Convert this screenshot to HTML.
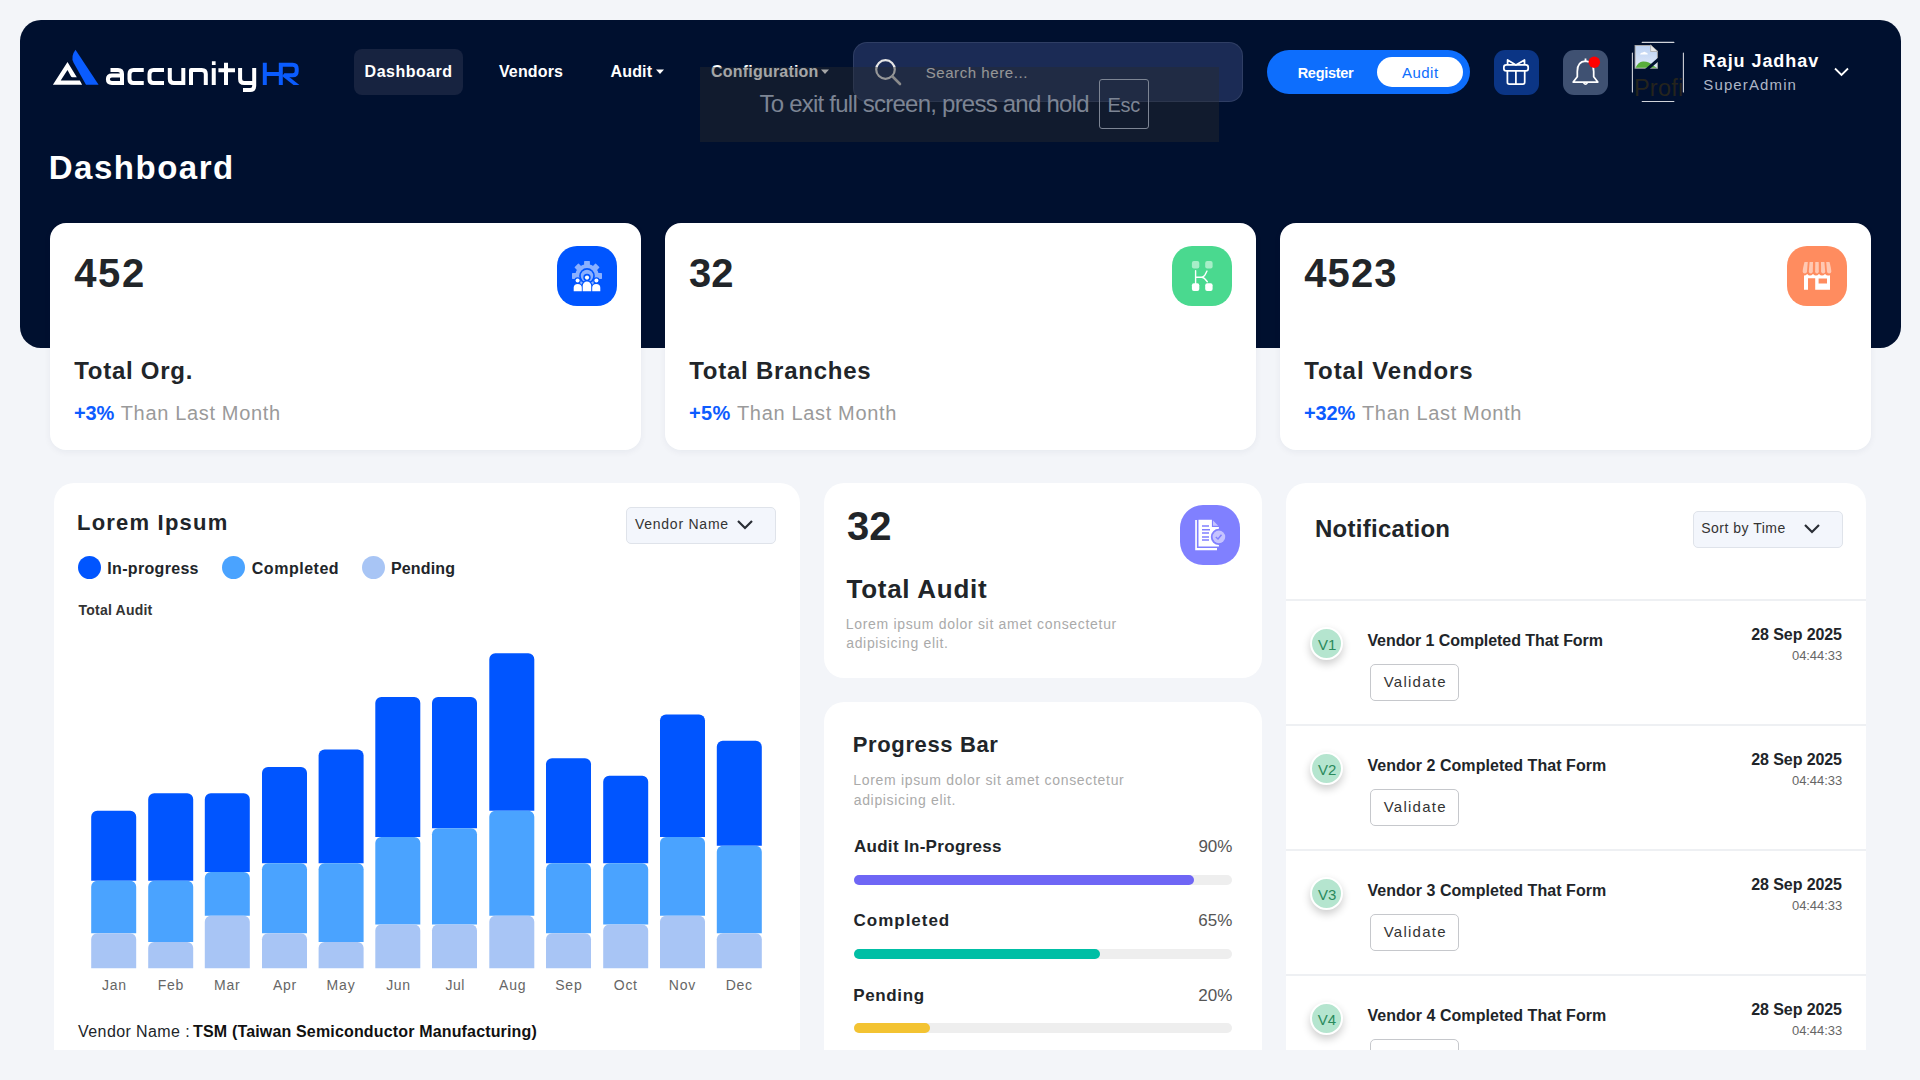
<!DOCTYPE html><html><head><meta charset="utf-8"><title>Dashboard</title><style>
*{margin:0;padding:0;box-sizing:border-box}
html,body{width:1920px;height:1080px;overflow:hidden;background:#f3f5f9;font-family:"Liberation Sans",sans-serif}
.a{position:absolute}
.t{position:absolute;white-space:nowrap;line-height:1}
svg{position:absolute;overflow:visible}
</style></head><body>
<div class="a" style="left:20px;top:20px;width:1881px;height:328px;background:#00102f;border-radius:21px"></div>
<svg style="left:0;top:0" width="320" height="110" viewBox="0 0 320 110">
<path d="M67.5 62.1 L76.8 77.2 H72.3 Q71.5 77.2 71 76.4 L67.5 70 L60.7 80.6 H79.8 L82.1 84.7 H52.9 Z" fill="#fff"/>
<path d="M86 84.7 L73.6 62.8 Q70.3 56.5 75.5 49.7 L98.6 84.7 Z" fill="#0a5cff"/>
<g fill="none" stroke="#fff" stroke-width="4" stroke-linejoin="round">
<path d="M110.5 70.1 H118 Q122 70.1 122 74.1 V85 M122 75.6 H111.9 Q107.9 75.6 107.9 79.25 Q107.9 82.9 111.9 82.9 H122"/>
<path d="M143.75 70.1 H133.5 Q129.5 70.1 129.5 74.1 V78.9 Q129.5 82.9 133.5 82.9 H143.75"/>
<path d="M164 70.1 H153.5 Q149.5 70.1 149.5 74.1 V78.9 Q149.5 82.9 153.5 82.9 H164"/>
<path d="M169.8 68.1 V78.9 Q169.8 82.9 173.8 82.9 H183.3 M183.3 68.1 V85"/>
<path d="M191 85 V70.1 H201.8 Q205.8 70.1 205.8 74.1 V85"/>
<path d="M213.75 68.1 V85"/>
<path d="M226 62.8 V85 M218.4 70.3 H235"/>
<path d="M240.1 68.1 V79 Q240.1 83 244.1 83 H254.2 M254.2 68.1 V86 Q254.2 89.9 250.2 89.9 H243"/>
</g>
<rect x="211.9" y="61.25" width="3.7" height="3.75" fill="#fff"/>
<g fill="none" stroke="#0a5cff" stroke-width="4" stroke-linejoin="round">
<path d="M264.8 62.8 V85 M266.8 74.1 H280.8 M280.8 62.8 V85 M280.8 64.8 H292.7 Q296.7 64.8 296.7 68.8 V71.3 Q296.7 75.3 292.7 75.3 H284.5"/>
</g>
<path d="M284.5 73.3 L299.4 85 H293.5 L282 76 Z" fill="#0a5cff"/>
</svg>
<div class="a" style="left:354px;top:49px;width:109px;height:46px;background:#172340;border-radius:8px"></div>
<div class="t" style="left:364.60px;top:63.66px;font-size:16px;font-weight:700;color:#fff;letter-spacing:0.487px;">Dashboard</div>
<div class="t" style="left:498.90px;top:63.66px;font-size:16px;font-weight:700;color:#fff;letter-spacing:0.150px;">Vendors</div>
<div class="t" style="left:610.60px;top:63.66px;font-size:16px;font-weight:700;color:#fff;letter-spacing:0.125px;">Audit</div>
<svg style="left:655.5px;top:69px" width="10" height="6"><path d="M0 0.5 L8 0.5 L4 5Z" fill="#fff"/></svg>
<div class="t" style="left:711.00px;top:63.66px;font-size:16px;font-weight:700;color:#fff;letter-spacing:0.208px;">Configuration</div>
<svg style="left:821px;top:69px" width="10" height="6"><path d="M0 0.5 L8 0.5 L4 5Z" fill="#fff"/></svg>
<div class="a" style="left:853px;top:42px;width:390px;height:60px;background:#1b2b55;border:1px solid rgba(255,255,255,0.09);border-radius:14px"></div>
<svg style="left:873px;top:57px" width="30" height="30" viewBox="0 0 30 30"><circle cx="12.5" cy="12.5" r="9.3" fill="none" stroke="#e6e6e6" stroke-width="2.2"/><path d="M19.5 19.5 L27 27" stroke="#cfcfcf" stroke-width="2.6" stroke-linecap="round"/></svg>
<div class="t" style="left:925.70px;top:65.40px;font-size:15px;font-weight:400;color:#e3e3e3;letter-spacing:0.569px;">Search here...</div>
<div class="a" style="left:1267px;top:50px;width:203px;height:44px;background:#0d6efd;border-radius:22px"></div>
<div class="a" style="left:1377px;top:57px;width:86px;height:30px;background:#fff;border-radius:15px"></div>
<div class="t" style="left:1297.70px;top:65.83px;font-size:14.5px;font-weight:700;color:#fff;letter-spacing:-0.286px;">Register</div>
<div class="t" style="left:1401.90px;top:65.40px;font-size:15px;font-weight:400;color:#0d6efd;letter-spacing:0.500px;">Audit</div>
<div class="a" style="left:1494px;top:50px;width:45px;height:45px;background:#0b3585;border-radius:11px"></div>
<svg style="left:1494px;top:50px" width="45" height="45" viewBox="0 0 45 45"><g fill="none" stroke="#fff" stroke-width="1.75" stroke-linejoin="round">
<rect x="9.85" y="14.9" width="24.35" height="6" rx="2.4"/>
<path d="M13.4 20.9 V32.3 Q13.4 34.1 15.2 34.1 H28.9 Q30.7 34.1 30.7 32.3 V20.9"/>
<path d="M21.9 20.9 V34.1"/>
<path d="M13.6 14.9 V9.9 L21.9 14.9 L30.5 9.9 V14.9"/>
</g></svg>
<div class="a" style="left:1563px;top:50px;width:45px;height:45px;background:#3f5172;border-radius:11px"></div>
<svg style="left:1563px;top:50px" width="45" height="45" viewBox="0 0 45 45"><g fill="none" stroke="#fff" stroke-width="1.75" stroke-linejoin="round">
<path d="M22.5 11.2 Q14.3 11.6 14.3 21.5 V26.8 L10.2 32 H34.8 L30.7 26.8 V21.5 Q30.7 11.6 22.5 11.2 Z"/>
<path d="M22.5 8.6 V11.2 M20.6 32.6 Q22.5 35.8 24.4 32.6"/>
</g><circle cx="31.3" cy="12.3" r="5.75" fill="#ff0000"/></svg>
<svg style="left:1630px;top:40px" width="60" height="66" viewBox="0 0 60 66">
<defs><linearGradient id="sky" x1="0" y1="0" x2="0" y2="1"><stop offset="0" stop-color="#bcd2f3"/><stop offset="1" stop-color="#dfe8f8"/></linearGradient></defs>
<path d="M12.2 2.4 H43.9" stroke="#d0d3da" stroke-width="1.1" stroke-linecap="round"/><path d="M12.2 61.5 H43.9" stroke="#d0d3da" stroke-width="1.1" stroke-linecap="round"/>
<path d="M2.4 13 V52" stroke="#d0d3da" stroke-width="1.1" stroke-linecap="round"/><path d="M53.4 13 V52" stroke="#d0d3da" stroke-width="1.1" stroke-linecap="round"/>
<path d="M4.6 5.5 Q4.6 4.9 5.3 4.9 H20.6 L27.9 11.5 V28.8 H4.6 Z" fill="#a9a9a9"/>
<path d="M5.6 5.9 H20.2 L26.9 12 V27.8 H5.6 Z" fill="url(#sky)"/>
<path d="M10 14.5 Q10.5 12.2 13 12.4 Q14.2 11 15.8 12.4 Q17.8 12.5 17.8 14.5 Z" fill="#fff"/>
<path d="M5.6 27.8 Q8 22 13 21.5 Q19 21.3 23 25.5 L26.9 27.8 Z" fill="#58ad3a"/>
<path d="M20.6 4.9 V11.5 H27.9 Z" fill="#e9e9e9" stroke="#a9a9a9" stroke-width="0.8"/>
<path d="M14.8 29.2 L28.3 17.6 V21.6 L19.4 29.2 Z" fill="#00102f"/>
</svg>
<div class="t" style="left:1634.00px;top:76.61px;font-size:23.5px;font-weight:400;color:#25241d;letter-spacing:0.200px;">Profi</div>
<div class="t" style="left:1702.80px;top:51.66px;font-size:18px;font-weight:700;color:#fff;letter-spacing:0.930px;">Raju Jadhav</div>
<div class="t" style="left:1703.30px;top:77.00px;font-size:15px;font-weight:400;color:#aeb6c6;letter-spacing:1.122px;">SuperAdmin</div>
<svg style="left:1834px;top:67px" width="16" height="10"><path d="M1 1.5 L7.5 8 L14 1.5" fill="none" stroke="#fff" stroke-width="1.8"/></svg>
<div class="a" style="left:700px;top:67px;width:519px;height:75px;background:rgba(40,42,46,0.42)"></div>
<div class="t" style="left:759.50px;top:91.78px;font-size:24px;font-weight:400;color:#7d8594;letter-spacing:-0.771px;">To exit full screen, press and hold</div>
<div class="a" style="left:1099px;top:79px;width:50px;height:50px;border:1.5px solid #7d8594;border-radius:3px"></div>
<div class="t" style="left:1107.40px;top:95.17px;font-size:20px;font-weight:400;color:#7d8594;letter-spacing:-0.300px;">Esc</div>
<div class="t" style="left:48.70px;top:151.07px;font-size:33px;font-weight:700;color:#fff;letter-spacing:1.525px;">Dashboard</div>
<div class="a" style="left:50px;top:223px;width:591px;height:227px;background:#fff;border-radius:16px;box-shadow:0 2px 7px rgba(20,30,70,0.055)"></div>
<div class="t" style="left:74.20px;top:253.14px;font-size:40px;font-weight:700;color:#212529;letter-spacing:1.650px;">452</div>
<div class="t" style="left:74.20px;top:359.08px;font-size:24px;font-weight:700;color:#212529;letter-spacing:0.733px;">Total Org.</div>
<div class="a" style="left:665px;top:223px;width:591px;height:227px;background:#fff;border-radius:16px;box-shadow:0 2px 7px rgba(20,30,70,0.055)"></div>
<div class="t" style="left:688.90px;top:253.14px;font-size:40px;font-weight:700;color:#212529;letter-spacing:0.100px;">32</div>
<div class="t" style="left:689.20px;top:359.08px;font-size:24px;font-weight:700;color:#212529;letter-spacing:0.762px;">Total Branches</div>
<div class="a" style="left:1280px;top:223px;width:591px;height:227px;background:#fff;border-radius:16px;box-shadow:0 2px 7px rgba(20,30,70,0.055)"></div>
<div class="t" style="left:1304.20px;top:253.14px;font-size:40px;font-weight:700;color:#212529;letter-spacing:1.133px;">4523</div>
<div class="t" style="left:1304.20px;top:359.08px;font-size:24px;font-weight:700;color:#212529;letter-spacing:0.967px;">Total Vendors</div>
<div class="t" style="left:74.00px;top:403.07px;font-size:20px;font-weight:700;color:#0d5cff;letter-spacing:-0.150px;">+3%</div>
<div class="t" style="left:120.75px;top:403.07px;font-size:20px;font-weight:400;color:#9a9a9a;letter-spacing:0.657px;">Than Last Month</div>
<div class="t" style="left:688.90px;top:403.07px;font-size:20px;font-weight:700;color:#0d5cff;letter-spacing:0.350px;">+5%</div>
<div class="t" style="left:737.00px;top:403.07px;font-size:20px;font-weight:400;color:#9a9a9a;letter-spacing:0.657px;">Than Last Month</div>
<div class="t" style="left:1303.90px;top:403.07px;font-size:20px;font-weight:700;color:#0d5cff;letter-spacing:-0.133px;">+32%</div>
<div class="t" style="left:1362.00px;top:403.07px;font-size:20px;font-weight:400;color:#9a9a9a;letter-spacing:0.657px;">Than Last Month</div>
<div class="a" style="left:557px;top:246px;width:60px;height:60px;background:#0055ff;border-radius:20px"></div>
<svg style="left:557px;top:246px" width="60" height="60" viewBox="0 0 60 60">
<g fill="#8ab0ff"><circle cx="30" cy="30" r="11.8"/><rect x="27.1" y="15" width="5.8" height="6" rx="0.6" transform="rotate(0 30 30)"/><rect x="27.1" y="15" width="5.8" height="6" rx="0.6" transform="rotate(45 30 30)"/><rect x="27.1" y="15" width="5.8" height="6" rx="0.6" transform="rotate(90 30 30)"/><rect x="27.1" y="15" width="5.8" height="6" rx="0.6" transform="rotate(135 30 30)"/><rect x="27.1" y="15" width="5.8" height="6" rx="0.6" transform="rotate(180 30 30)"/><rect x="27.1" y="15" width="5.8" height="6" rx="0.6" transform="rotate(225 30 30)"/><rect x="27.1" y="15" width="5.8" height="6" rx="0.6" transform="rotate(270 30 30)"/><rect x="27.1" y="15" width="5.8" height="6" rx="0.6" transform="rotate(315 30 30)"/></g>
<circle cx="30" cy="30" r="7.9" fill="#0055ff"/>
<circle cx="30" cy="30" r="6.2" fill="#8ab0ff"/>
<circle cx="30" cy="31.4" r="3.7" fill="#0055ff"/>
<circle cx="30" cy="31.6" r="2.1" fill="#fff"/>
<g fill="#0055ff" stroke="#0055ff" stroke-width="2.4">
<circle cx="20.6" cy="34.5" r="2"/><circle cx="39.4" cy="34.5" r="2"/>
<path d="M16.7 46 V41.8 A4.05 3.8 0 0 1 24.8 41.8 V46 Z"/>
<path d="M35.2 46 V41.8 A4.05 3.8 0 0 1 43.3 41.8 V46 Z"/>
<path d="M25.7 46 V39.8 A4.25 4.3 0 0 1 34.2 39.8 V46 Z"/>
</g>
<rect x="14" y="45.2" width="32" height="3" fill="#0055ff"/>
<g fill="#fff">
<circle cx="20.6" cy="34.5" r="2"/><circle cx="39.4" cy="34.5" r="2"/>
<path d="M16.7 45.2 V41.8 A4.05 3.8 0 0 1 24.8 41.8 V45.2 Z"/>
<path d="M35.2 45.2 V41.8 A4.05 3.8 0 0 1 43.3 41.8 V45.2 Z"/>
<path d="M25.7 45.2 V39.8 A4.25 4.3 0 0 1 34.2 39.8 V45.2 Z"/>
</g>
</svg>
<div class="a" style="left:1172px;top:246px;width:60px;height:60px;background:#4ad98f;border-radius:20px"></div>
<svg style="left:1172px;top:246px" width="60" height="60" viewBox="0 0 60 60">
<rect x="19.9" y="15.1" width="7.4" height="7.4" rx="2" fill="#a7eec8"/>
<rect x="33.2" y="15.1" width="7.4" height="7.4" rx="2" fill="#a7eec8"/>
<rect x="19.9" y="37.3" width="7.4" height="7.6" rx="2" fill="#fff"/>
<rect x="33.2" y="37.3" width="7.4" height="7.6" rx="2" fill="#fff"/>
<path d="M23.6 24.6 V37.5 M23.6 31.2 H29.5 Q31.6 31.2 33 28.8 L35 25 M29.5 31.2 Q31.6 31.2 33 33 L35.3 35.8" fill="none" stroke="#fff" stroke-width="1.4" stroke-linecap="round"/>
</svg>
<div class="a" style="left:1787px;top:246px;width:60px;height:60px;background:#ff8c5f;border-radius:20px"></div>
<svg style="left:1787px;top:246px" width="60" height="60" viewBox="0 0 60 60">
<g fill="#ffc8b2">
<path d="M17.5 16 H20.8 L20 25.5 Q19.8 27.6 17.8 27.6 Q15.7 27.6 15.7 25.5 Q15.7 23 17.5 16Z"/>
<path d="M22.6 16 H26 L25.8 25.5 Q25.6 27.6 23.8 27.6 Q21.8 27.6 21.8 25.5Z"/>
<path d="M28.3 16 H31.7 L31.8 25.5 Q31.6 27.6 30 27.6 Q28.1 27.6 28.1 25.5Z"/>
<path d="M34 16 H37.4 L38.2 25.5 Q38.2 27.6 36.2 27.6 Q34.2 27.6 34.1 25.5Z"/>
<path d="M39.2 16 H42.5 Q44.3 23 44.3 25.5 Q44.3 27.6 42.2 27.6 Q40.2 27.6 40 25.5Z"/>
</g>
<path fill="#fff" fill-rule="evenodd" d="M17 29.5 Q18.8 29.5 20.2 28 Q21.5 29.5 23 29.5 Q24.5 29.5 26 28 Q27.5 29.5 29 29.5 Q30.5 29.5 32 28 Q33.5 29.5 35 29.5 Q36.5 29.5 38 28 Q39.5 29.5 41 29.5 Q42 29.5 43 29.3 V43.8 H28.2 V32.2 H21 V43.8 H17 Z M31.6 32.6 H40 V37.4 H31.6 Z"/>
</svg>
<div class="a" style="left:54px;top:483px;width:746px;height:567px;background:#fff;border-radius:20px;border-bottom-left-radius:0;border-bottom-right-radius:0"></div>
<div class="a" style="left:824px;top:483px;width:438px;height:195px;background:#fff;border-radius:20px;"></div>
<div class="a" style="left:824px;top:702px;width:438px;height:348px;background:#fff;border-radius:20px;border-bottom-left-radius:0;border-bottom-right-radius:0"></div>
<div class="a" style="left:1286px;top:483px;width:580px;height:567px;background:#fff;border-radius:20px;border-bottom-left-radius:0;border-bottom-right-radius:0"></div>
<div class="t" style="left:77.00px;top:512.38px;font-size:22px;font-weight:700;color:#212529;letter-spacing:1.210px;">Lorem Ipsum</div>
<div class="a" style="left:626px;top:507px;width:150px;height:37px;background:#f3f6fc;border:1px solid #dfe3ea;border-radius:5px"></div>
<div class="t" style="left:634.90px;top:517.05px;font-size:14px;font-weight:400;color:#333;letter-spacing:0.760px;">Vendor Name</div>
<svg style="left:736px;top:519px" width="18" height="12"><path d="M2 2 L9 9 L16 2" fill="none" stroke="#2a2e35" stroke-width="2.2"/></svg>
<div class="a" style="left:77.8px;top:555.5px;width:23px;height:23px;border-radius:50%;background:#0055ff"></div>
<div class="a" style="left:222.0px;top:555.5px;width:23px;height:23px;border-radius:50%;background:#4aa3ff"></div>
<div class="a" style="left:361.5px;top:555.5px;width:23px;height:23px;border-radius:50%;background:#a8c5f5"></div>
<div class="t" style="left:107.30px;top:560.96px;font-size:16px;font-weight:700;color:#212529;letter-spacing:0.320px;">In-progress</div>
<div class="t" style="left:251.80px;top:560.96px;font-size:16px;font-weight:700;color:#212529;letter-spacing:0.513px;">Completed</div>
<div class="t" style="left:390.90px;top:560.96px;font-size:16px;font-weight:700;color:#212529;letter-spacing:0.183px;">Pending</div>
<div class="t" style="left:78.60px;top:603.05px;font-size:14px;font-weight:700;color:#333;letter-spacing:0.200px;">Total Audit</div>
<svg style="left:0;top:0" width="1920" height="1080"><path d="M91.20 880.70 V816.70 A6 6 0 0 1 97.20 810.70 H130.20 A6 6 0 0 1 136.20 816.70 V880.70 Z" fill="#0055ff"/><path d="M91.20 933.20 V886.70 A6 6 0 0 1 97.20 880.70 H130.20 A6 6 0 0 1 136.20 886.70 V933.20 Z" fill="#4aa3ff"/><path d="M91.20 968.20 V939.20 A6 6 0 0 1 97.20 933.20 H130.20 A6 6 0 0 1 136.20 939.20 V968.20 Z" fill="#a8c5f5"/><path d="M148.20 880.70 V799.20 A6 6 0 0 1 154.20 793.20 H187.20 A6 6 0 0 1 193.20 799.20 V880.70 Z" fill="#0055ff"/><path d="M148.20 941.95 V886.70 A6 6 0 0 1 154.20 880.70 H187.20 A6 6 0 0 1 193.20 886.70 V941.95 Z" fill="#4aa3ff"/><path d="M148.20 968.20 V947.95 A6 6 0 0 1 154.20 941.95 H187.20 A6 6 0 0 1 193.20 947.95 V968.20 Z" fill="#a8c5f5"/><path d="M204.80 871.95 V799.20 A6 6 0 0 1 210.80 793.20 H243.80 A6 6 0 0 1 249.80 799.20 V871.95 Z" fill="#0055ff"/><path d="M204.80 915.70 V877.95 A6 6 0 0 1 210.80 871.95 H243.80 A6 6 0 0 1 249.80 877.95 V915.70 Z" fill="#4aa3ff"/><path d="M204.80 968.20 V921.70 A6 6 0 0 1 210.80 915.70 H243.80 A6 6 0 0 1 249.80 921.70 V968.20 Z" fill="#a8c5f5"/><path d="M262.00 863.20 V772.95 A6 6 0 0 1 268.00 766.95 H301.00 A6 6 0 0 1 307.00 772.95 V863.20 Z" fill="#0055ff"/><path d="M262.00 933.20 V869.20 A6 6 0 0 1 268.00 863.20 H301.00 A6 6 0 0 1 307.00 869.20 V933.20 Z" fill="#4aa3ff"/><path d="M262.00 968.20 V939.20 A6 6 0 0 1 268.00 933.20 H301.00 A6 6 0 0 1 307.00 939.20 V968.20 Z" fill="#a8c5f5"/><path d="M318.60 863.20 V755.45 A6 6 0 0 1 324.60 749.45 H357.60 A6 6 0 0 1 363.60 755.45 V863.20 Z" fill="#0055ff"/><path d="M318.60 941.95 V869.20 A6 6 0 0 1 324.60 863.20 H357.60 A6 6 0 0 1 363.60 869.20 V941.95 Z" fill="#4aa3ff"/><path d="M318.60 968.20 V947.95 A6 6 0 0 1 324.60 941.95 H357.60 A6 6 0 0 1 363.60 947.95 V968.20 Z" fill="#a8c5f5"/><path d="M375.30 836.95 V702.95 A6 6 0 0 1 381.30 696.95 H414.30 A6 6 0 0 1 420.30 702.95 V836.95 Z" fill="#0055ff"/><path d="M375.30 924.45 V842.95 A6 6 0 0 1 381.30 836.95 H414.30 A6 6 0 0 1 420.30 842.95 V924.45 Z" fill="#4aa3ff"/><path d="M375.30 968.20 V930.45 A6 6 0 0 1 381.30 924.45 H414.30 A6 6 0 0 1 420.30 930.45 V968.20 Z" fill="#a8c5f5"/><path d="M432.00 828.20 V702.95 A6 6 0 0 1 438.00 696.95 H471.00 A6 6 0 0 1 477.00 702.95 V828.20 Z" fill="#0055ff"/><path d="M432.00 924.45 V834.20 A6 6 0 0 1 438.00 828.20 H471.00 A6 6 0 0 1 477.00 834.20 V924.45 Z" fill="#4aa3ff"/><path d="M432.00 968.20 V930.45 A6 6 0 0 1 438.00 924.45 H471.00 A6 6 0 0 1 477.00 930.45 V968.20 Z" fill="#a8c5f5"/><path d="M489.30 810.70 V659.20 A6 6 0 0 1 495.30 653.20 H528.30 A6 6 0 0 1 534.30 659.20 V810.70 Z" fill="#0055ff"/><path d="M489.30 915.70 V816.70 A6 6 0 0 1 495.30 810.70 H528.30 A6 6 0 0 1 534.30 816.70 V915.70 Z" fill="#4aa3ff"/><path d="M489.30 968.20 V921.70 A6 6 0 0 1 495.30 915.70 H528.30 A6 6 0 0 1 534.30 921.70 V968.20 Z" fill="#a8c5f5"/><path d="M546.00 863.20 V764.20 A6 6 0 0 1 552.00 758.20 H585.00 A6 6 0 0 1 591.00 764.20 V863.20 Z" fill="#0055ff"/><path d="M546.00 933.20 V869.20 A6 6 0 0 1 552.00 863.20 H585.00 A6 6 0 0 1 591.00 869.20 V933.20 Z" fill="#4aa3ff"/><path d="M546.00 968.20 V939.20 A6 6 0 0 1 552.00 933.20 H585.00 A6 6 0 0 1 591.00 939.20 V968.20 Z" fill="#a8c5f5"/><path d="M603.20 863.20 V781.70 A6 6 0 0 1 609.20 775.70 H642.20 A6 6 0 0 1 648.20 781.70 V863.20 Z" fill="#0055ff"/><path d="M603.20 924.45 V869.20 A6 6 0 0 1 609.20 863.20 H642.20 A6 6 0 0 1 648.20 869.20 V924.45 Z" fill="#4aa3ff"/><path d="M603.20 968.20 V930.45 A6 6 0 0 1 609.20 924.45 H642.20 A6 6 0 0 1 648.20 930.45 V968.20 Z" fill="#a8c5f5"/><path d="M660.00 836.95 V720.45 A6 6 0 0 1 666.00 714.45 H699.00 A6 6 0 0 1 705.00 720.45 V836.95 Z" fill="#0055ff"/><path d="M660.00 915.70 V842.95 A6 6 0 0 1 666.00 836.95 H699.00 A6 6 0 0 1 705.00 842.95 V915.70 Z" fill="#4aa3ff"/><path d="M660.00 968.20 V921.70 A6 6 0 0 1 666.00 915.70 H699.00 A6 6 0 0 1 705.00 921.70 V968.20 Z" fill="#a8c5f5"/><path d="M716.80 845.70 V746.70 A6 6 0 0 1 722.80 740.70 H755.80 A6 6 0 0 1 761.80 746.70 V845.70 Z" fill="#0055ff"/><path d="M716.80 933.20 V851.70 A6 6 0 0 1 722.80 845.70 H755.80 A6 6 0 0 1 761.80 851.70 V933.20 Z" fill="#4aa3ff"/><path d="M716.80 968.20 V939.20 A6 6 0 0 1 722.80 933.20 H755.80 A6 6 0 0 1 761.80 939.20 V968.20 Z" fill="#a8c5f5"/></svg>
<div class="t" style="left:102.06px;top:977.95px;font-size:14px;font-weight:400;color:#666;letter-spacing:0.693px;">Jan</div>
<div class="t" style="left:157.64px;top:977.95px;font-size:14px;font-weight:400;color:#666;letter-spacing:0.760px;">Feb</div>
<div class="t" style="left:214.07px;top:977.95px;font-size:14px;font-weight:400;color:#666;letter-spacing:0.782px;">Mar</div>
<div class="t" style="left:273.00px;top:977.95px;font-size:14px;font-weight:400;color:#666;letter-spacing:0.750px;">Apr</div>
<div class="t" style="left:326.49px;top:977.95px;font-size:14px;font-weight:400;color:#666;letter-spacing:0.863px;">May</div>
<div class="t" style="left:386.16px;top:977.95px;font-size:14px;font-weight:400;color:#666;letter-spacing:0.693px;">Jun</div>
<div class="t" style="left:445.39px;top:977.95px;font-size:14px;font-weight:400;color:#666;letter-spacing:0.512px;">Jul</div>
<div class="t" style="left:498.98px;top:977.95px;font-size:14px;font-weight:400;color:#666;letter-spacing:0.822px;">Aug</div>
<div class="t" style="left:555.15px;top:977.95px;font-size:14px;font-weight:400;color:#666;letter-spacing:0.850px;">Sep</div>
<div class="t" style="left:613.79px;top:977.95px;font-size:14px;font-weight:400;color:#666;letter-spacing:0.712px;">Oct</div>
<div class="t" style="left:668.81px;top:977.95px;font-size:14px;font-weight:400;color:#666;letter-spacing:0.742px;">Nov</div>
<div class="t" style="left:725.78px;top:977.95px;font-size:14px;font-weight:400;color:#666;letter-spacing:0.720px;">Dec</div>
<div class="t" style="left:78.10px;top:1023.76px;font-size:16px;font-weight:400;color:#212529;letter-spacing:0.400px;">Vendor Name :</div>
<div class="t" style="left:193.10px;top:1023.76px;font-size:16px;font-weight:700;color:#111;letter-spacing:0.159px;">TSM (Taiwan Semiconductor Manufacturing)</div>
<div class="t" style="left:847.10px;top:505.94px;font-size:40px;font-weight:700;color:#212529;letter-spacing:-0.200px;">32</div>
<div class="t" style="left:846.50px;top:576.29px;font-size:26px;font-weight:700;color:#212529;letter-spacing:0.730px;">Total Audit</div>
<div class="t" style="left:845.70px;top:616.65px;font-size:14px;font-weight:400;color:#aaa;letter-spacing:0.689px;">Lorem ipsum dolor sit amet consectetur</div>
<div class="t" style="left:846.20px;top:636.35px;font-size:14px;font-weight:400;color:#aaa;letter-spacing:0.669px;">adipisicing elit.</div>
<div class="a" style="left:1180px;top:505px;width:60px;height:60px;background:#8080ff;border-radius:23px"></div>
<svg style="left:1180px;top:505px" width="60" height="60" viewBox="0 0 60 60">
<path d="M15.2 15 H16.9 V43 H37 V45.2 H15.2 Z" fill="#fff"/>
<path d="M18.5 14.8 H31.9 V21.9 H38.9 V23.8 A8.1 8.1 0 0 0 38.9 40 V41.5 H18.5 Z" fill="#fff"/>
<path d="M33 15.5 L38.2 20.8 H33 Z" fill="#c5c3ff"/>
<g stroke="#8080ff" stroke-width="1.5"><path d="M22 21 H29 M22 24.7 H30 M22 28.1 H29 M22 31.9 H29 M22 35 H29"/></g>
<circle cx="38.9" cy="31.9" r="6.3" fill="#c5c3ff"/>
<path d="M35.8 32 L38 34 L41.5 29.8" fill="none" stroke="#8080ff" stroke-width="1.5"/>
</svg>
<div class="t" style="left:852.80px;top:734.28px;font-size:22px;font-weight:700;color:#212529;letter-spacing:0.627px;">Progress Bar</div>
<div class="t" style="left:853.20px;top:773.25px;font-size:14px;font-weight:400;color:#aaa;letter-spacing:0.689px;">Lorem ipsum dolor sit amet consectetur</div>
<div class="t" style="left:853.70px;top:793.15px;font-size:14px;font-weight:400;color:#aaa;letter-spacing:0.669px;">adipisicing elit.</div>
<div class="t" style="left:853.90px;top:837.71px;font-size:17px;font-weight:700;color:#212529;letter-spacing:0.312px;">Audit In-Progress</div>
<div class="t" style="left:1198.40px;top:837.71px;font-size:17px;font-weight:400;color:#555;letter-spacing:-0.050px;">90%</div>
<div class="a" style="left:854px;top:874.8px;width:378px;height:10px;background:#eeeeee;border-radius:5px"></div>
<div class="a" style="left:854px;top:874.8px;width:340.2px;height:10px;background:#6f66f5;border-radius:5px"></div>
<div class="t" style="left:853.60px;top:912.11px;font-size:17px;font-weight:700;color:#212529;letter-spacing:0.975px;">Completed</div>
<div class="t" style="left:1198.30px;top:912.11px;font-size:17px;font-weight:400;color:#555;letter-spacing:0.000px;">65%</div>
<div class="a" style="left:854px;top:949.2px;width:378px;height:10px;background:#eeeeee;border-radius:5px"></div>
<div class="a" style="left:854px;top:949.2px;width:245.7px;height:10px;background:#00bfa5;border-radius:5px"></div>
<div class="t" style="left:853.20px;top:986.61px;font-size:17px;font-weight:700;color:#212529;letter-spacing:0.633px;">Pending</div>
<div class="t" style="left:1198.30px;top:986.61px;font-size:17px;font-weight:400;color:#555;letter-spacing:0.000px;">20%</div>
<div class="a" style="left:854px;top:1023px;width:378px;height:10px;background:#eeeeee;border-radius:5px"></div>
<div class="a" style="left:854px;top:1023px;width:75.6px;height:10px;background:#f3c332;border-radius:5px"></div>
<div class="t" style="left:1314.90px;top:517.08px;font-size:24px;font-weight:700;color:#212529;letter-spacing:0.282px;">Notification</div>
<div class="a" style="left:1693px;top:511px;width:150px;height:37px;background:#f3f6fc;border:1px solid #dfe3ea;border-radius:5px"></div>
<div class="t" style="left:1701.20px;top:521.15px;font-size:14px;font-weight:400;color:#333;letter-spacing:0.500px;">Sort by Time</div>
<svg style="left:1803px;top:523px" width="18" height="12"><path d="M2 2 L9 9 L16 2" fill="none" stroke="#2a2e35" stroke-width="2.2"/></svg>
<div class="a" style="left:1286px;top:599px;width:580px;height:2px;background:#eef0f3"></div>
<div class="a" style="left:1310.3px;top:627px;width:33px;height:33px;border-radius:50%;background:#b5e5cf;border:2.5px solid #fff;box-shadow:0 4px 9px rgba(0,0,0,0.2)"></div>
<div class="t" style="left:1317.95px;top:636.60px;font-size:15px;font-weight:400;color:#2b8a5c;letter-spacing:0.000px;">V1</div>
<div class="t" style="left:1367.40px;top:632.66px;font-size:16px;font-weight:700;color:#212529;letter-spacing:-0.067px;">Vendor 1 Completed That Form</div>
<div class="t" style="left:1751.30px;top:626.76px;font-size:16px;font-weight:700;color:#212529;letter-spacing:-0.090px;">28 Sep 2025</div>
<div class="t" style="left:1792.00px;top:648.70px;font-size:13px;font-weight:400;color:#666;letter-spacing:-0.071px;">04:44:33</div>
<div class="a" style="left:1370px;top:664px;width:89px;height:37px;border:1px solid #c6c8cc;border-radius:5px;background:#fff"></div>
<div class="t" style="left:1383.70px;top:674.30px;font-size:15px;font-weight:400;color:#333;letter-spacing:1.257px;">Validate</div>
<div class="a" style="left:1286px;top:724px;width:580px;height:2px;background:#eef0f3"></div>
<div class="a" style="left:1310.3px;top:752px;width:33px;height:33px;border-radius:50%;background:#b5e5cf;border:2.5px solid #fff;box-shadow:0 4px 9px rgba(0,0,0,0.2)"></div>
<div class="t" style="left:1317.95px;top:761.60px;font-size:15px;font-weight:400;color:#2b8a5c;letter-spacing:0.000px;">V2</div>
<div class="t" style="left:1367.40px;top:757.66px;font-size:16px;font-weight:700;color:#212529;letter-spacing:0.056px;">Vendor 2 Completed That Form</div>
<div class="t" style="left:1751.30px;top:751.76px;font-size:16px;font-weight:700;color:#212529;letter-spacing:-0.090px;">28 Sep 2025</div>
<div class="t" style="left:1792.00px;top:773.70px;font-size:13px;font-weight:400;color:#666;letter-spacing:-0.071px;">04:44:33</div>
<div class="a" style="left:1370px;top:789px;width:89px;height:37px;border:1px solid #c6c8cc;border-radius:5px;background:#fff"></div>
<div class="t" style="left:1383.70px;top:799.30px;font-size:15px;font-weight:400;color:#333;letter-spacing:1.257px;">Validate</div>
<div class="a" style="left:1286px;top:849px;width:580px;height:2px;background:#eef0f3"></div>
<div class="a" style="left:1310.3px;top:877px;width:33px;height:33px;border-radius:50%;background:#b5e5cf;border:2.5px solid #fff;box-shadow:0 4px 9px rgba(0,0,0,0.2)"></div>
<div class="t" style="left:1317.90px;top:886.60px;font-size:15px;font-weight:400;color:#2b8a5c;letter-spacing:0.000px;">V3</div>
<div class="t" style="left:1367.40px;top:882.66px;font-size:16px;font-weight:700;color:#212529;letter-spacing:0.056px;">Vendor 3 Completed That Form</div>
<div class="t" style="left:1751.30px;top:876.76px;font-size:16px;font-weight:700;color:#212529;letter-spacing:-0.090px;">28 Sep 2025</div>
<div class="t" style="left:1792.00px;top:898.70px;font-size:13px;font-weight:400;color:#666;letter-spacing:-0.071px;">04:44:33</div>
<div class="a" style="left:1370px;top:914px;width:89px;height:37px;border:1px solid #c6c8cc;border-radius:5px;background:#fff"></div>
<div class="t" style="left:1383.70px;top:924.30px;font-size:15px;font-weight:400;color:#333;letter-spacing:1.257px;">Validate</div>
<div class="a" style="left:1286px;top:974px;width:580px;height:2px;background:#eef0f3"></div>
<div class="a" style="left:1310.3px;top:1002px;width:33px;height:33px;border-radius:50%;background:#b5e5cf;border:2.5px solid #fff;box-shadow:0 4px 9px rgba(0,0,0,0.2)"></div>
<div class="t" style="left:1317.80px;top:1011.60px;font-size:15px;font-weight:400;color:#2b8a5c;letter-spacing:0.000px;">V4</div>
<div class="t" style="left:1367.40px;top:1007.66px;font-size:16px;font-weight:700;color:#212529;letter-spacing:0.056px;">Vendor 4 Completed That Form</div>
<div class="t" style="left:1751.30px;top:1001.76px;font-size:16px;font-weight:700;color:#212529;letter-spacing:-0.090px;">28 Sep 2025</div>
<div class="t" style="left:1792.00px;top:1023.70px;font-size:13px;font-weight:400;color:#666;letter-spacing:-0.071px;">04:44:33</div>
<div class="a" style="left:1370px;top:1039px;width:89px;height:37px;border:1px solid #c6c8cc;border-radius:5px;background:#fff"></div>
<div class="t" style="left:1383.70px;top:1049.30px;font-size:15px;font-weight:400;color:#333;letter-spacing:1.257px;">Validate</div>
<div class="a" style="left:0;top:1050px;width:1920px;height:30px;background:#f3f5f9"></div>
</body></html>
